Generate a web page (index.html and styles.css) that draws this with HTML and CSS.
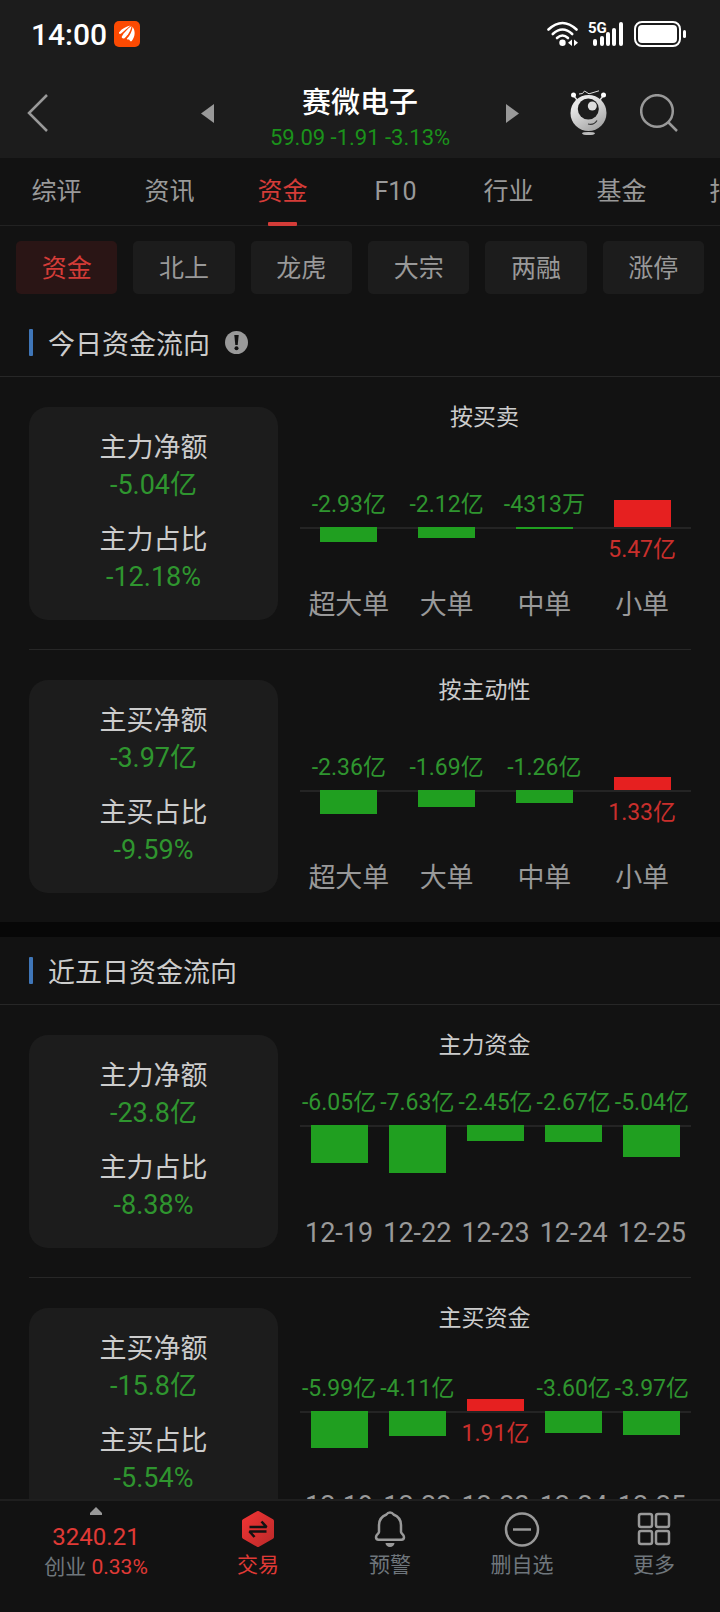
FILE: index.html
```html
<!DOCTYPE html>
<html lang="zh-CN">
<head>
	<meta charset="utf-8">
	<meta name="viewport" content="width=device-width, initial-scale=1">
	<title>赛微电子 - 资金</title>
	<link rel="stylesheet" href="styles.css">
</head>
<body>
	<header>
		<div class="status-bar">
			<span class="clock">14:00</span>
			<svg class="app-badge" width="26" height="26" viewBox="0 0 26 26">
				<rect width="26" height="26" rx="5" fill="#fc4a02"/>
				<path d="M5 11.500C8 7.500 12 5.500 16.500 4.500C13.500 7 10 10 6.800 12.800C5.500 13.300 4.800 12.500 5 11.500z" fill="#fff"/>
				<path d="M7.800 15.500C10 11.500 13.500 8 17.500 5C17 9.500 14 14 10.500 17.300C8.800 18 7.400 17 7.800 15.500z" fill="#fff"/>
				<path d="M12.800 17.800C16 14.500 18 10.500 18.600 5.800C21.500 10 21.500 15.500 17.500 20.300C16 21 15.800 19 15 18.600C14 18.500 12.800 18.600 12.800 17.800z" fill="#fff"/>
			</svg>
			<div class="signals">
				<svg width="32" height="26" viewBox="0 0 32 26" fill="none" stroke="#fff" stroke-width="2.600" stroke-linecap="round">
					<path d="M1.500 8.500Q15.500 -4.500 29.500 8.500"/>
					<path d="M5.800 13Q15.500 4 25.200 13"/>
					<path d="M10 17Q15.500 12 21 17"/>
					<circle cx="15.500" cy="21.800" r="3.200" fill="#fff" stroke="none"/>
					<path d="M25 18.500v6.500l-4-3.200zM27 18.500v6.500l4-3.200z" fill="#fff" stroke="none"/>
				</svg>
				<svg width="37" height="26" viewBox="0 0 37 26">
					<text class="net-type" x="0" y="12">5G</text>
					<g fill="#fff">
						<rect x="5" y="18" width="4" height="7" rx="2"/>
						<rect x="12" y="15" width="4" height="10" rx="2"/>
						<rect x="18" y="11" width="4" height="14" rx="2"/>
						<rect x="24" y="7" width="4" height="18" rx="2"/>
						<rect x="31" y="1" width="4" height="24" rx="2"/>
					</g>
				</svg>
				<svg width="53" height="26" viewBox="0 0 53 26">
					<rect x="1" y="1" width="45" height="24" rx="7" fill="none" stroke="#fff" stroke-width="2"/>
					<rect x="4" y="4" width="39" height="18" rx="4" fill="#fff"/>
					<rect x="49" y="9" width="3" height="8" rx="1.500" fill="#fff"/>
				</svg>
			</div>
		</div>

		<div class="title-bar">
			<div class="side">
				<button class="icon-btn" aria-label="返回">
					<svg width="22" height="38" viewBox="0 0 22 38" fill="none" stroke="#999" stroke-width="2.500"><path d="M20 1L2 19l18 18"/></svg>
				</button>
				<button class="icon-btn" aria-label="上一只">
					<svg width="13" height="19" viewBox="0 0 13 19"><path d="M13 0v19L0 9.500z" fill="#999"/></svg>
				</button>
			</div>
			<div class="stock">
				<h1>赛微电子</h1>
				<p>59.09 -1.91 -3.13%</p>
			</div>
			<div class="side">
				<button class="icon-btn" aria-label="下一只">
					<svg width="13" height="19" viewBox="0 0 13 19"><path d="M0 0v19l13-9.500z" fill="#999"/></svg>
				</button>
				<div class="tools">
					<button class="icon-btn" aria-label="智能助手">
						<svg width="38" height="46" viewBox="0 0 38 46">
							<defs>
								<linearGradient id="robot" x1="0" y1="0" x2="0.600" y2="1">
									<stop offset="0.300" stop-color="#e8e8e8"/>
									<stop offset="1" stop-color="#a8a8a8"/>
								</linearGradient>
							</defs>
							<path d="M3 5l5 6M34 5l-5 6" stroke="#ddd" stroke-width="1.500"/>
							<circle cx="3.500" cy="5" r="2.500" fill="#fff"/>
							<circle cx="33.500" cy="5" r="2.500" fill="#fff"/>
							<path d="M9 4l3.500-.5 2-2.500 4.500 2.800L29 .8" fill="none" stroke="#ddd" stroke-width="1"/>
							<circle cx="18.500" cy="23" r="18" fill="url(#robot)"/>
							<circle cx="18.300" cy="19" r="10.500" fill="#1c1c1c"/>
							<circle cx="22.300" cy="16" r="4.500" fill="#ddd"/>
							<path d="M18 34q6 1.500 9-3.500" fill="none" stroke="#333" stroke-width="1.200"/>
							<ellipse cx="18.500" cy="43.500" rx="6.500" ry="1.600" fill="#bbb"/>
						</svg>
					</button>
					<button class="icon-btn" aria-label="搜索">
						<svg width="38" height="38" viewBox="0 0 38 38" fill="none" stroke="#999" stroke-width="2.500"><circle cx="17" cy="17" r="15.800"/><path d="M28 28l9 9"/></svg>
					</button>
				</div>
			</div>
		</div>
	</header>

	<nav class="tabs">
		<a href="#">综评</a>
		<a href="#">资讯</a>
		<a href="#" class="active">资金</a>
		<a href="#">F10</a>
		<a href="#">行业</a>
		<a href="#">基金</a>
		<a href="#">指标</a>
	</nav>

	<main>
		<div class="chips">
			<button class="active">资金</button>
			<button>北上</button>
			<button>龙虎</button>
			<button>大宗</button>
			<button>两融</button>
			<button>涨停</button>
		</div>

		<section>
			<h2>今日资金流向
				<svg class="info" width="23" height="23" viewBox="0 0 23 23">
					<circle cx="11.500" cy="11.500" r="11.500" fill="#999"/>
					<path d="M9.300 4h4.400l-1 10h-2.400z" fill="#121212"/>
					<circle cx="11.500" cy="17.300" r="2" fill="#121212"/>
				</svg>
			</h2>

			<div class="row">
				<dl class="card">
					<dt>主力净额</dt>
					<dd>-5.04亿</dd>
					<dt>主力占比</dt>
					<dd>-12.18%</dd>
				</dl>
				<div class="chart">
					<h3>按买卖</h3>
					<div class="plot" style="--axis: 98px">
						<div class="col">
							<div class="up"><span>-2.93亿</span></div>
							<div class="down"><i style="height: 15px"></i></div>
							<b>超大单</b>
						</div>
						<div class="col">
							<div class="up"><span>-2.12亿</span></div>
							<div class="down"><i style="height: 11px"></i></div>
							<b>大单</b>
						</div>
						<div class="col">
							<div class="up"><span>-4313万</span></div>
							<div class="down"><i style="height: 2px"></i></div>
							<b>中单</b>
						</div>
						<div class="col">
							<div class="up"><i style="height: 27px"></i></div>
							<div class="down"><span>5.47亿</span></div>
							<b>小单</b>
						</div>
					</div>
				</div>
			</div>

			<div class="row">
				<dl class="card">
					<dt>主买净额</dt>
					<dd>-3.97亿</dd>
					<dt>主买占比</dt>
					<dd>-9.59%</dd>
				</dl>
				<div class="chart">
					<h3>按主动性</h3>
					<div class="plot" style="--axis: 88px">
						<div class="col">
							<div class="up"><span>-2.36亿</span></div>
							<div class="down"><i style="height: 24px"></i></div>
							<b>超大单</b>
						</div>
						<div class="col">
							<div class="up"><span>-1.69亿</span></div>
							<div class="down"><i style="height: 17px"></i></div>
							<b>大单</b>
						</div>
						<div class="col">
							<div class="up"><span>-1.26亿</span></div>
							<div class="down"><i style="height: 13px"></i></div>
							<b>中单</b>
						</div>
						<div class="col">
							<div class="up"><i style="height: 13px"></i></div>
							<div class="down"><span>1.33亿</span></div>
							<b>小单</b>
						</div>
					</div>
				</div>
			</div>
		</section>

		<section>
			<h2>近五日资金流向</h2>

			<div class="row">
				<dl class="card">
					<dt>主力净额</dt>
					<dd>-23.8亿</dd>
					<dt>主力占比</dt>
					<dd>-8.38%</dd>
				</dl>
				<div class="chart">
					<h3>主力资金</h3>
					<div class="plot" style="--axis: 68px">
						<div class="col">
							<div class="up"><span>-6.05亿</span></div>
							<div class="down"><i style="height: 38px"></i></div>
							<b>12-19</b>
						</div>
						<div class="col">
							<div class="up"><span>-7.63亿</span></div>
							<div class="down"><i style="height: 48px"></i></div>
							<b>12-22</b>
						</div>
						<div class="col">
							<div class="up"><span>-2.45亿</span></div>
							<div class="down"><i style="height: 16px"></i></div>
							<b>12-23</b>
						</div>
						<div class="col">
							<div class="up"><span>-2.67亿</span></div>
							<div class="down"><i style="height: 17px"></i></div>
							<b>12-24</b>
						</div>
						<div class="col">
							<div class="up"><span>-5.04亿</span></div>
							<div class="down"><i style="height: 32px"></i></div>
							<b>12-25</b>
						</div>
					</div>
				</div>
			</div>

			<div class="row">
				<dl class="card">
					<dt>主买净额</dt>
					<dd>-15.8亿</dd>
					<dt>主买占比</dt>
					<dd>-5.54%</dd>
				</dl>
				<div class="chart">
					<h3>主买资金</h3>
					<div class="plot" style="--axis: 81px">
						<div class="col">
							<div class="up"><span>-5.99亿</span></div>
							<div class="down"><i style="height: 37px"></i></div>
							<b>12-19</b>
						</div>
						<div class="col">
							<div class="up"><span>-4.11亿</span></div>
							<div class="down"><i style="height: 25px"></i></div>
							<b>12-22</b>
						</div>
						<div class="col">
							<div class="up"><i style="height: 12px"></i></div>
							<div class="down"><span>1.91亿</span></div>
							<b>12-23</b>
						</div>
						<div class="col">
							<div class="up"><span>-3.60亿</span></div>
							<div class="down"><i style="height: 22px"></i></div>
							<b>12-24</b>
						</div>
						<div class="col">
							<div class="up"><span>-3.97亿</span></div>
							<div class="down"><i style="height: 24px"></i></div>
							<b>12-25</b>
						</div>
					</div>
				</div>
			</div>
		</section>
	</main>

	<nav class="bottom-bar">
		<a href="#" class="index">
			<svg width="12" height="8" viewBox="0 0 12 8"><path d="M6 0l6 6v2H0V6z" fill="#999"/></svg>
			<strong>3240.21</strong>
			<span>创业 <em>0.33%</em></span>
		</a>
		<a href="#" class="trade">
			<svg width="36" height="36" viewBox="0 0 36 36">
				<defs>
					<linearGradient id="hex" x1="0" y1="0" x2="1" y2="1">
						<stop offset="0" stop-color="#f03434"/>
						<stop offset="1" stop-color="#bd2a2a"/>
					</linearGradient>
				</defs>
				<path d="M18 2l14 8v16l-14 8-14-8V10z" fill="url(#hex)" stroke="url(#hex)" stroke-width="4" stroke-linejoin="round"/>
				<path d="M9.500 16h17l-5-5.500M26.500 20.500h-17l5 5.500" fill="none" stroke="#121212" stroke-width="2.600" stroke-linejoin="bevel"/>
			</svg>
			<span>交易</span>
		</a>
		<a href="#">
			<svg width="36" height="36" viewBox="0 0 36 36" fill="none" stroke="#999" stroke-width="2.500" stroke-linejoin="round">
				<path d="M14.500 3.500a4 4 0 0 1 7 0C26.500 5.500 29 9.500 29 14v7c0 1.500 3 2.500 3 5 0 1.800-1 2.700-2.500 2.700h-23C5 28.700 4 27.800 4 26c0-2.500 3-3.500 3-5v-7c0-4.500 2.500-8.500 7.500-10.500z"/>
				<path d="M13.500 32h9a4.500 4 0 0 1-9 0z" fill="#999" stroke="none"/>
			</svg>
			<span>预警</span>
		</a>
		<a href="#">
			<svg width="36" height="36" viewBox="0 0 36 36" fill="none" stroke="#999" stroke-width="2.500"><circle cx="18" cy="18.500" r="16"/><path d="M9 18.500h18"/></svg>
			<span>删自选</span>
		</a>
		<a href="#">
			<svg width="36" height="36" viewBox="0 0 36 36" fill="none" stroke="#999" stroke-width="2.500">
				<rect x="3" y="3" width="13" height="13" rx="2"/>
				<rect x="20" y="3" width="13" height="13" rx="2"/>
				<rect x="3" y="20" width="13" height="13" rx="2"/>
				<rect x="20" y="20" width="13" height="13" rx="2"/>
			</svg>
			<span>更多</span>
		</a>
	</nav>
</body>
</html>
```
FILE: styles.css
```css
* {
  box-sizing: border-box;
  margin: 0;
  padding: 0;
}

body {
  display: flex;
  flex-direction: column;
  height: 100vh;
  overflow: hidden;
  font-family: Roboto, "Noto Sans CJK SC", sans-serif;
  background-color: #121212;
  color: #999;
}

a {
  color: inherit;
  text-decoration: none;
}

button {
  border: none;
  background: none;
  color: inherit;
  font-family: inherit;
  cursor: pointer;
}

svg {
  display: block;
  flex: none;
}

/* header */
header {
  flex: none;
  background-color: #1c1c1c;
}

.status-bar {
  display: flex;
  align-items: center;
  height: 68px;
  padding: 0 33px 0 31px;
}

.clock {
  font-size: 30px;
  font-weight: 500;
  color: #fff;
}

.app-badge {
  margin-left: 7px;
}

.signals {
  display: flex;
  gap: 9px;
  margin-left: auto;
}

.net-type {
  font-size: 15px;
  font-weight: 700;
  fill: #fff;
}

.title-bar {
  display: flex;
  align-items: center;
  height: 90px;
  padding: 0 27px;
}

.side {
  display: flex;
  flex: 1;
  align-items: center;
  justify-content: space-between;
}

.tools {
  display: flex;
  align-items: center;
  gap: 32px;
  margin-right: 15px;
}

.stock {
  flex: none;
  width: 292px;
  padding-top: 14px;
  text-align: center;
}

.stock h1 {
  font-size: 29px;
  line-height: 36px;
  font-weight: 500;
  color: #fff;
}

.stock p {
  font-size: 22px;
  line-height: 34px;
  color: #1b921b;
}

/* tabs */
.tabs {
  display: flex;
  flex: none;
  height: 68px;
  overflow: hidden;
  box-shadow: inset 0 -1px #222;
}

.tabs a {
  display: flex;
  flex: 0 0 113px;
  flex-direction: column;
  align-items: center;
  font-size: 25px;
  line-height: 68px;
}

.tabs .active {
  color: #d43c38;
}

.tabs .active::after {
  content: "";
  width: 29px;
  height: 4px;
  margin-top: -4px;
  border-radius: 1px;
  background-color: #d43c38;
}

main {
  flex: 1;
  min-height: 0;
  overflow: hidden;
}

.chips {
  display: flex;
  gap: 16px;
  padding: 15px 16px;
}

.chips button {
  flex: 1;
  height: 53px;
  padding-bottom: 4px;
  border-radius: 5px;
  background-color: #1c1c1c;
  font-size: 25px;
}

.chips .active {
  background-color: #2a1515;
  color: #d43c38;
}

/* sections */
section + section {
  border-top: 15px solid #070707;
}

h2 {
  display: flex;
  align-items: center;
  height: 68px;
  padding: 0 29px;
  border-bottom: 1px solid #272727;
  font-size: 27px;
  font-weight: 400;
  color: #ccc;
}

h2::before {
  content: "";
  width: 4px;
  height: 27px;
  margin-right: 15px;
  border-radius: 1px;
  background-color: #3f76b8;
}

.info {
  margin-left: 15px;
}

.row {
  display: flex;
  gap: 22px;
  margin: 0 29px;
  padding: 30px 0 29px;
}

.row + .row {
  border-top: 1px solid #272727;
}

.card {
  flex: 249 0 0;
  padding: 23px 0 24px;
  border-radius: 19px;
  background-color: #1c1c1c;
  font-size: 27px;
  line-height: 37px;
  text-align: center;
}

.card dt {
  color: #ccc;
}

.card dd {
  color: #2f952f;
}

.card dd + dt {
  margin-top: 18px;
}

.chart {
  display: flex;
  flex: 391 0 0;
  flex-direction: column;
}

h3 {
  padding-right: 22px;
  font-size: 23px;
  line-height: 22px;
  font-weight: 400;
  text-align: center;
  color: #ccc;
}

.plot {
  display: flex;
  flex: 1;
}

.col {
  display: grid;
  flex: 1 0 0;
  grid-template-rows: var(--axis) 1fr 31px;
  min-width: 0;
  text-align: center;
}

.up,
.down {
  display: flex;
  flex-direction: column;
  align-items: center;
}

.up {
  justify-content: flex-end;
}

.down {
  border-top: 2px solid #242424;
}

.col span {
  font-size: 23px;
  line-height: 26px;
  white-space: nowrap;
}

.up span {
  margin-bottom: 9px;
  color: #2f952f;
}

.down span {
  margin-top: 8px;
  color: #c92f2c;
}

.col i {
  width: 57px;
}

.up i {
  background-color: #e62020;
}

.down i {
  margin-top: -2px;
  background-color: #209f20;
}

.col b {
  font-size: 27px;
  line-height: 32px;
  font-weight: 400;
}

/* bottom bar */
.bottom-bar {
  display: flex;
  flex: none;
  height: 113px;
  border-top: 2px solid #1f1f1f;
}

.bottom-bar a {
  display: flex;
  flex: 132 0 0;
  flex-direction: column;
  align-items: center;
  gap: 3px;
  padding-top: 10px;
  font-size: 21px;
  line-height: 30px;
  color: #6f767c;
}

.bottom-bar .index {
  flex-grow: 192;
  gap: 0;
  padding-top: 6px;
}

.index strong {
  margin-top: 7px;
  font-size: 24px;
  font-weight: 400;
  color: #e03a36;
}

.index em {
  font-style: normal;
  color: #e03a36;
}

.bottom-bar .trade {
  color: #e03a36;
}
```
